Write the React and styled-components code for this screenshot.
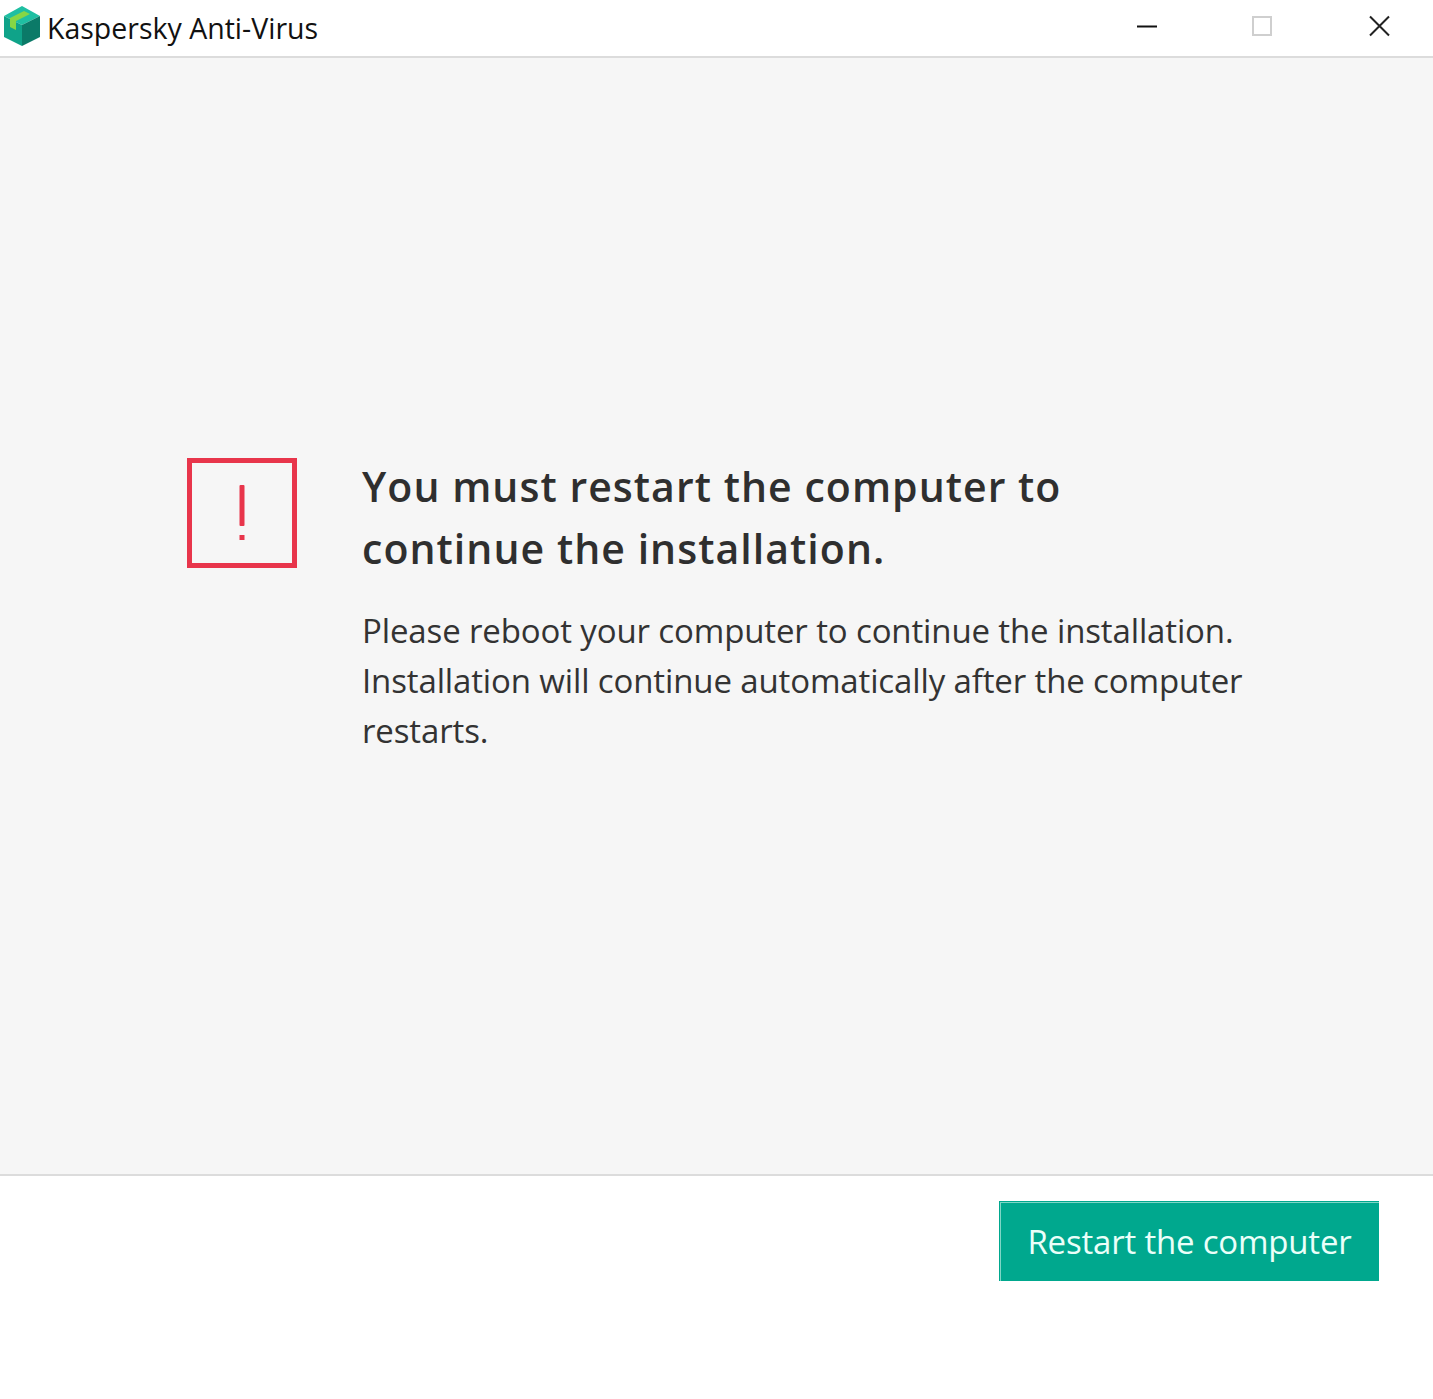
import React from "react";
import styled, { createGlobalStyle } from "styled-components";

const Global = createGlobalStyle`
  html, body { margin: 0; padding: 0; background: #fff; }
  * { box-sizing: border-box; }
`;
const Win = styled.div`
  width: 1433px; height: 1399px; display: flex; flex-direction: column;
  font-family: "Open Sans", "Noto Sans", sans-serif; color: #2f2f2f; background: #fff;
`;
const TitleBar = styled.header`
  height: 58px; flex: none; display: flex; align-items: center;
  padding: 0 41px 2px 4px; background: #fff; border-bottom: 2px solid #dcdcdc;
`;
const AppName = styled.span`
  margin-left: 7px; padding-top: 2px; font-size: 28.5px; color: #111; line-height: 56px; flex: 1;
`;
const WinBtn = styled.span`
  display: flex; width: 24px; height: 24px; margin-left: ${p => p.$gap}px; margin-top: -2px;
`;
const Main = styled.main`
  height: 1118px; flex: none; background: #f6f6f6; border-bottom: 2px solid #dcdcdc;
  display: flex; padding: 400px 0 0 187px;
`;
const Texts = styled.div`
  margin-left: 65px; width: 900px;
`;
const Heading = styled.h1`
  margin: -3px 0 0; font-size: 41px; line-height: 62px; font-weight: 600; letter-spacing: 1.05px; color: #2f2f2f;
`;
const Body = styled.p`
  margin: 27px 0 0; font-size: 33px; line-height: 50px; font-weight: 400; letter-spacing: -0.13px; color: #333;
`;
const Footer = styled.footer`
  flex: 1; display: flex; justify-content: flex-end; align-items: flex-start;
  padding: 25px 54px 0 0; background: #fff;
`;
const PrimaryButton = styled.button`
  width: 380px; height: 80px; background: #00a88e; color: #eafff9;
  font: 400 33px "Open Sans", "Noto Sans", sans-serif; letter-spacing: -0.2px;
  border: 0; padding: 0 0 0 1px;
  box-shadow: inset 1px 1px 0 #00a88e, inset 2px 2px 0 #7fd6c6;
`;

const Logo = () => (
  <svg width="36" height="40" viewBox="0 0 36 40" style={{ flex: "none", marginTop: -3 }}>
    <polygon points="18,0 36,10 18,19 0,10" fill="#1fbfa2" />
    <polygon points="0,10 18,19 18,40 0,31" fill="#0fa389" />
    <polygon points="36,10 18,19 18,40 36,31" fill="#0b7a68" />
    <polygon points="6,12 20,5 26,8 12,15 12,24 6,21" fill="#86d645" />
  </svg>
);

const AlertIcon = () => (
  <svg width="110" height="110" viewBox="0 0 110 110" style={{ flex: "none" }}>
    <rect x="2.5" y="2.5" width="105" height="105" fill="none" stroke="#e8354b" strokeWidth="5" />
    <rect x="52.5" y="27" width="5" height="41" rx="1" fill="#e8354b" />
    <rect x="52.5" y="77" width="5" height="5" fill="#e8354b" />
  </svg>
);

export default function App() {
  return (
    <Win>
      <Global />
      <TitleBar>
        <Logo />
        <AppName>Kaspersky Anti-Virus</AppName>
        <WinBtn $gap={0}>
          <svg width="24" height="24"><path d="M1 12.5H21" stroke="#111" strokeWidth="2" /></svg>
        </WinBtn>
        <WinBtn $gap={91}>
          <svg width="24" height="24"><rect x="2" y="3" width="18" height="18" fill="none" stroke="#cfcfcf" strokeWidth="2" /></svg>
        </WinBtn>
        <WinBtn $gap={93}>
          <svg width="24" height="24"><path d="M2 2.5L21 21.5M21 2.5L2 21.5" stroke="#222" strokeWidth="2" /></svg>
        </WinBtn>
      </TitleBar>
      <Main>
        <AlertIcon />
        <Texts>
          <Heading>You must restart the computer to<br />continue the installation.</Heading>
          <Body>Please reboot your computer to continue the installation.<br />Installation will continue automatically after the computer<br />restarts.</Body>
        </Texts>
      </Main>
      <Footer>
        <PrimaryButton>Restart the computer</PrimaryButton>
      </Footer>
    </Win>
  );
}
